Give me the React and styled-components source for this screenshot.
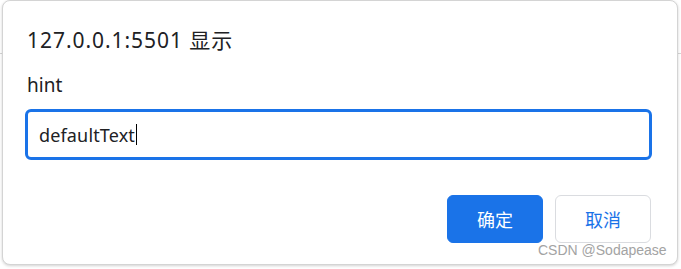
import React from "react";
import styled, { createGlobalStyle } from "styled-components";

const GlobalStyle = createGlobalStyle`
  html, body {
    margin: 0;
    padding: 0;
    background: #ffffff linear-gradient(to bottom, transparent 53px, #d6d6d6 53px, #d6d6d6 54px, transparent 54px);
    font-family: "Noto Sans", "Noto Sans CJK SC", sans-serif;
  }
`;

function App() {
  return (
    <>
      <GlobalStyle />
      <Page>
        <Dialog>
          <Title>127.0.0.1:5501 显示</Title>
          <Hint>hint</Hint>
          <Field>
            defaultText
            <Caret />
          </Field>
          <Actions>
            <ActionButton primary>确定</ActionButton>
            <ActionButton>取消</ActionButton>
          </Actions>
        </Dialog>
        <Watermark>CSDN @Sodapease</Watermark>
      </Page>
    </>
  );
}

export default App;

const Page = styled.div`
  position: relative;
  width: 681px;
  height: 269px;
  padding: 0 3px 0 2px;
  box-sizing: border-box;
`;

const Dialog = styled.div`
  display: flex;
  flex-direction: column;
  height: 265px;
  box-sizing: border-box;
  padding: 25px 25px 21px 22px;
  background: #fff;
  border: 1px solid #d4d4d4;
  border-radius: 8px;
  box-shadow: 0 1px 3px rgba(0, 0, 0, 0.18);
`;

const Title = styled.div`
  padding-left: 2px;
  font-size: 21px;
  line-height: 29px;
  letter-spacing: 0.95px;
  color: #202124;
`;

const Hint = styled.div`
  margin-top: 17px;
  padding-left: 2px;
  font-size: 19px;
  line-height: 26px;
  color: #202124;
`;

const Field = styled.div`
  display: flex;
  align-items: center;
  margin-top: 11px;
  height: 51px;
  box-sizing: border-box;
  padding-left: 11px;
  border: 3px solid #1a73e8;
  border-radius: 6px;
  font-size: 18px;
  letter-spacing: 0.15px;
  color: #202124;
`;

const Caret = styled.span`
  width: 1px;
  height: 21px;
  margin-left: 1px;
  background: #000;
`;

const Actions = styled.div`
  display: flex;
  justify-content: flex-end;
  gap: 12px;
  margin-top: auto;
  padding-right: 1px;
`;

const ActionButton = styled.button`
  width: 96px;
  height: 48px;
  box-sizing: border-box;
  border-radius: 6px;
  font-family: inherit;
  font-size: 18px;
  cursor: pointer;
  border: 1px solid ${(p) => (p.primary ? "#1a73e8" : "#dadce0")};
  background: ${(p) => (p.primary ? "#1a73e8" : "#fff")};
  color: ${(p) => (p.primary ? "#fff" : "#1a73e8")};
`;

const Watermark = styled.div`
  position: absolute;
  left: 538px;
  top: 242px;
  font-family: "Liberation Sans", sans-serif;
  font-size: 14px;
  color: #a3a3a3;
`;
